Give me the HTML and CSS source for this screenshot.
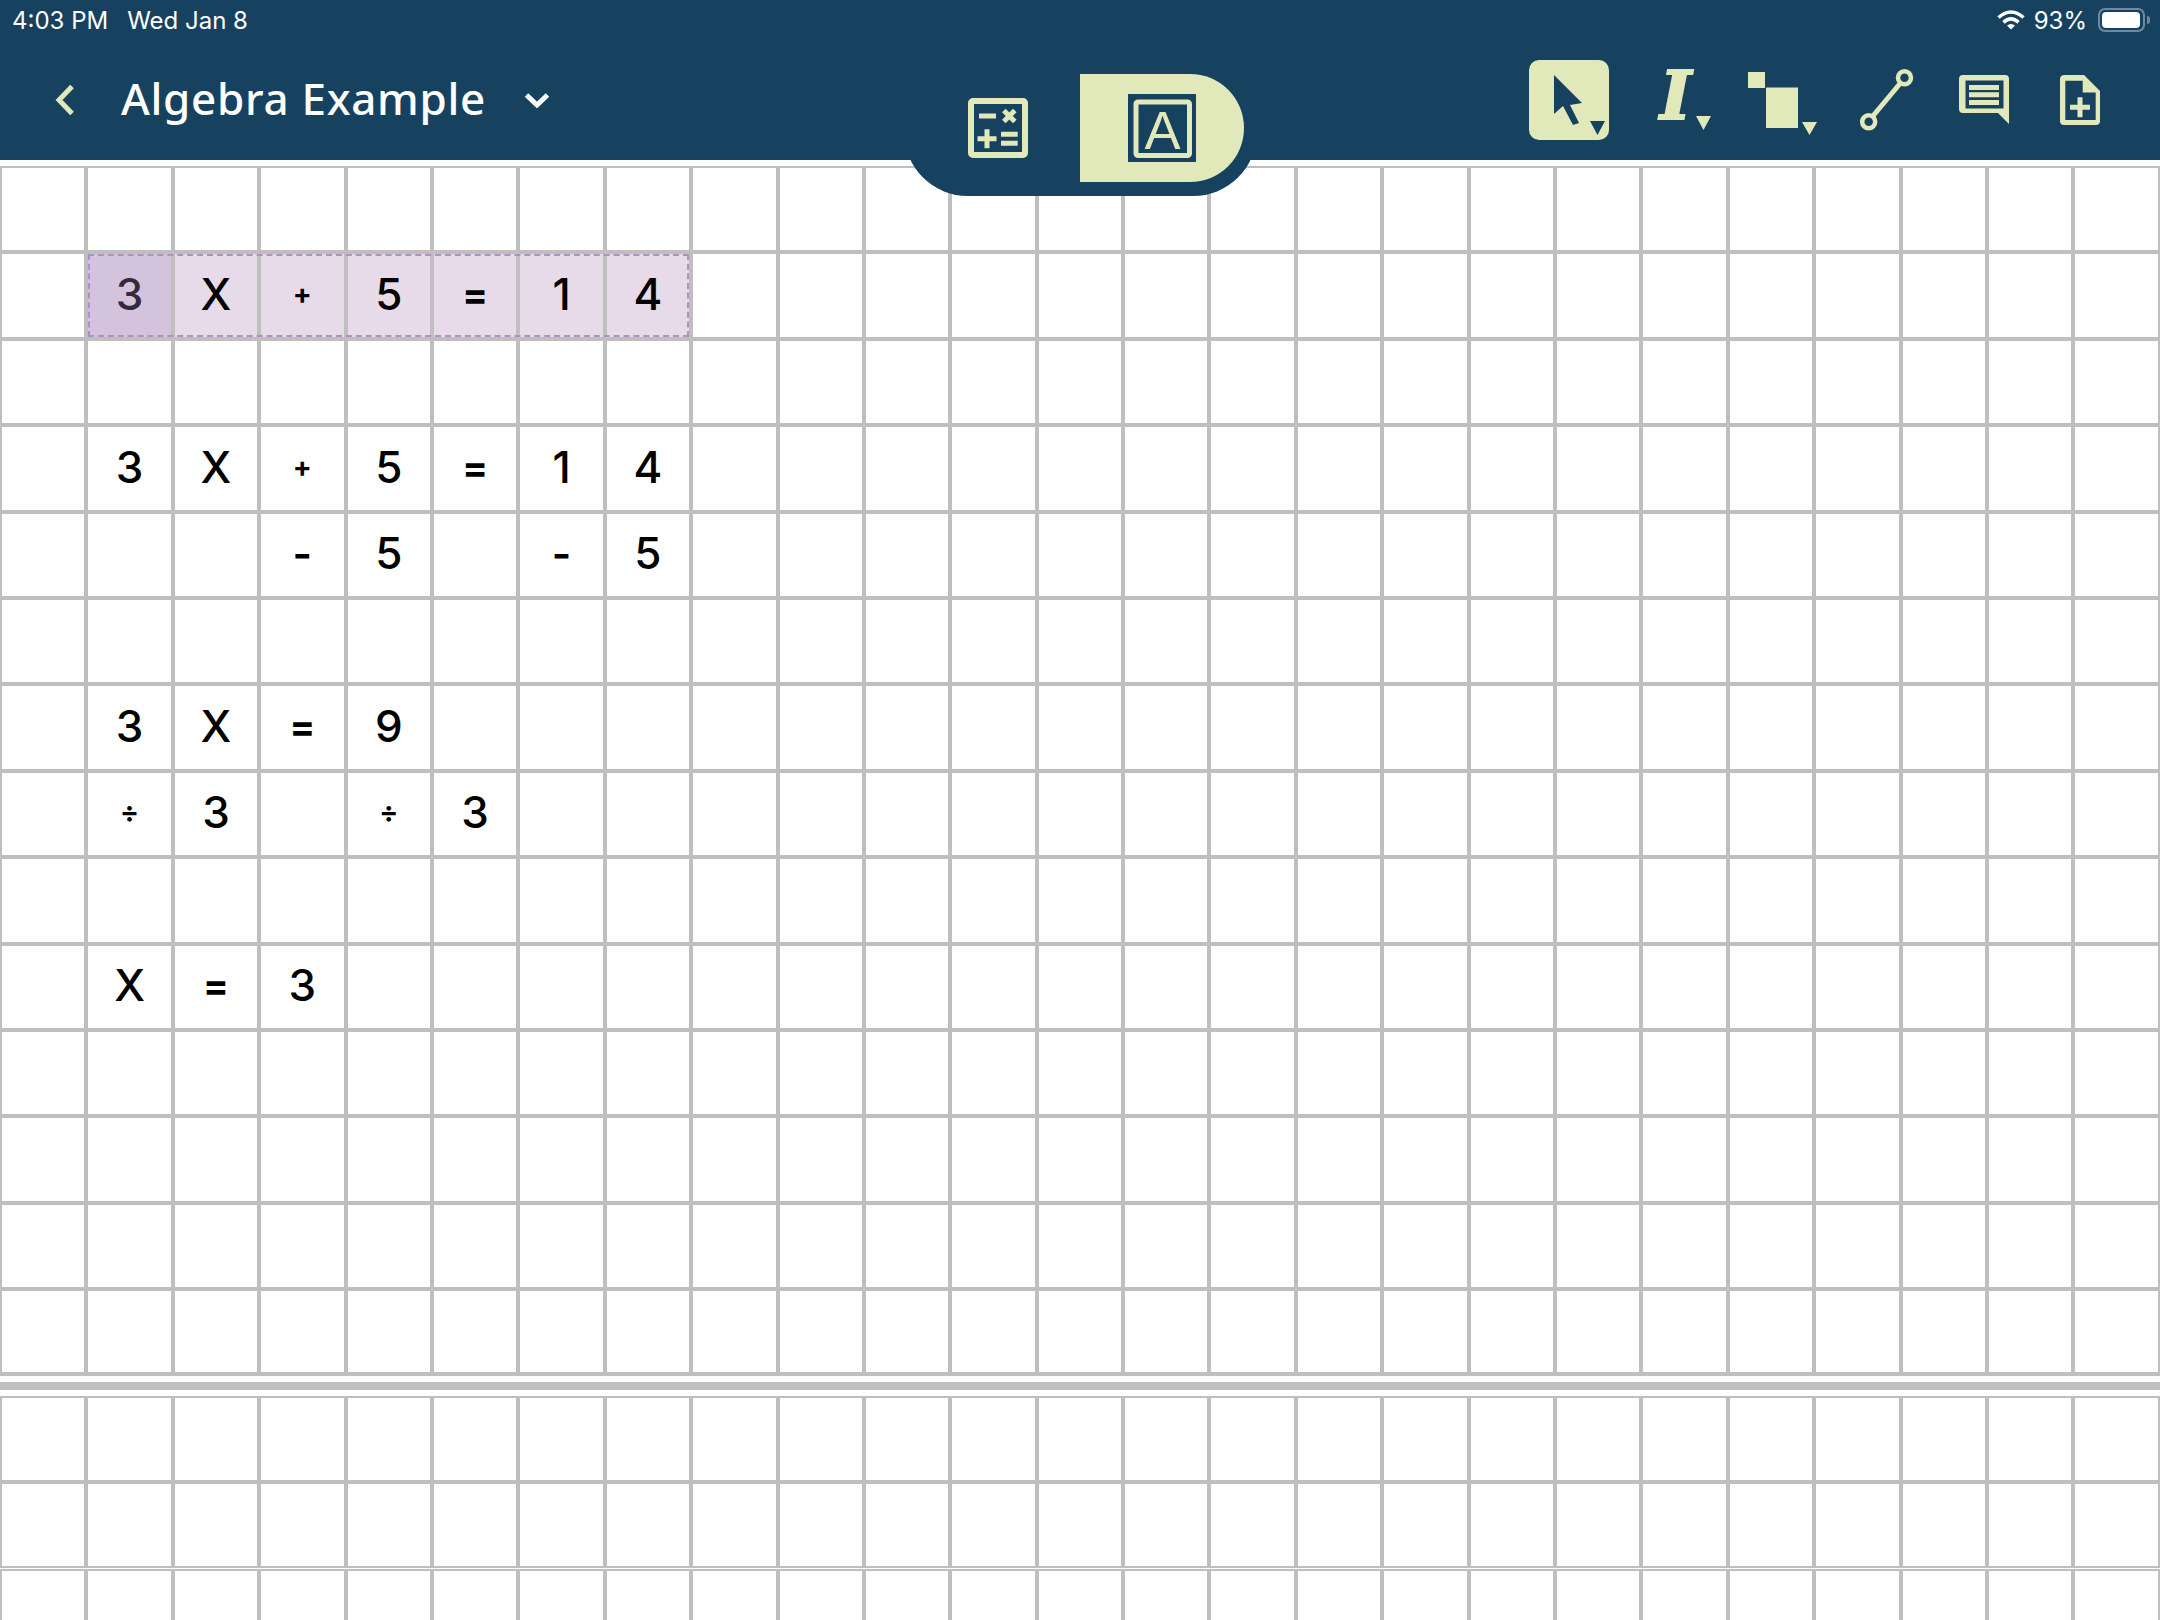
FILE: index.html
```html
<!DOCTYPE html>
<html lang="en">
<head>
    <meta charset="UTF-8">
    <title>Algebra Example</title>
    <link rel="stylesheet" href="styles.css">
</head>
<body>
    <header class="header">
        <div class="status-bar">
            <span class="status-time">4:03 PM</span>
            <span class="status-date">Wed Jan 8</span>
            <svg class="wifi" width="28" height="20" viewBox="0 0 28 20">
                <path d="M1.5 7.5Q14 -3.5 26.5 7.5M6.5 12.3Q14 5.6 21.5 12.3" fill="none" stroke="#fff" stroke-width="3.6"/>
                <path d="M10 15.5Q14 12.5 18 15.5L14 19.5Z" fill="#fff"/>
            </svg>
            <span class="status-battery-text">93%</span>
            <div class="battery"><div class="battery-fill"></div></div>
            <div class="battery-tip"></div>
        </div>
        <div class="nav-bar">
            <svg class="back" width="20" height="32" viewBox="0 0 20 32">
                <path d="M17 2.5L4 16L17 29.5" fill="none" stroke="#e1e9bb" stroke-width="5"/>
            </svg>
            <h1 class="title">Algebra Example</h1>
            <svg class="title-arrow" width="26" height="16" viewBox="0 0 26 16">
                <path d="M2.5 3L13 13L23.5 3" fill="none" stroke="#fff" stroke-width="5"/>
            </svg>
            <div class="toolbar">
                <div class="tool-selected">
                    <svg width="80" height="80" viewBox="0 0 80 80">
                        <path d="M25 15L53 43L41 45L50 63L44 65L34 46L25 54Z" fill="#17425f"/>
                        <path d="M61 61H76L68.5 75Z" fill="#17425f"/>
                    </svg>
                </div>
                <div class="tool-text">
                    <span class="tool-letter">I</span>
                    <svg class="tool-arrow" width="15" height="14" viewBox="0 0 15 14">
                        <path d="M0 0H15L7.500 14Z" fill="#e1e9bb"/>
                    </svg>
                </div>
                <svg class="tool-shape" width="70" height="63" viewBox="0 0 70 63">
                    <path d="M0 0H17V16H0ZM18 15.500H50V56H18ZM54 50H69L61.500 63Z" fill="#e1e9bb"/>
                </svg>
                <svg class="tool-line" width="54" height="64" viewBox="0 0 54 64">
                    <circle cx="44.500" cy="9.700" r="6.500" fill="none" stroke="#e1e9bb" stroke-width="4.500"/>
                    <circle cx="8.700" cy="53.700" r="6.500" fill="none" stroke="#e1e9bb" stroke-width="4.500"/>
                    <path d="M40.500 15L12.500 48.500" stroke="#e1e9bb" stroke-width="5"/>
                </svg>
                <svg class="tool-comment" width="52" height="52" viewBox="0 0 52 52">
                    <path fill-rule="evenodd" d="M5 1H47Q51 1 51 5V50L40 39H5Q1 39 1 35V5Q1 1 5 1ZM7.500 6.500V34.500H45.500V6.500Z" fill="#e1e9bb"/>
                    <path d="M11 11H41V16H11ZM11 18.300H41V23.300H11ZM11 26H41V31H11Z" fill="#e1e9bb"/>
                </svg>
                <svg class="tool-doc" width="40" height="52" viewBox="0 0 40 52">
                    <path fill-rule="evenodd" d="M5 1H24L40 17V47Q40 51 36 51H4Q0 51 0 47V5Q0 1 5 1ZM5.300 6.700V46H35.700V18.500H22.700V6.700Z" fill="#e1e9bb"/>
                    <path d="M20 23.300V43.300M10 33.300H30" stroke="#e1e9bb" stroke-width="5"/>
                </svg>
            </div>
        </div>
        <div class="mode-switch">
            <svg class="mode-calc" width="60" height="60" viewBox="0 0 60 60">
                <rect x="3" y="3" width="54" height="54" rx="2" fill="none" stroke="#e1e9bb" stroke-width="6"/>
                <path d="M11 18H28M35.800 12.500L46.800 23.500M46.800 12.500L35.800 23.500M9.500 40.700H28.500M19 31.200V50.200M33 36.200H49.700M33 45.200H49.700" stroke="#e1e9bb" stroke-width="5"/>
            </svg>
            <div class="mode-active">
                <svg width="68" height="68" viewBox="0 0 68 68">
                    <rect width="68" height="68" fill="#17425f"/>
                    <rect x="8" y="8" width="53.500" height="53.500" rx="2" fill="none" stroke="#e1e9bb" stroke-width="5"/>
                    <text class="mode-letter" x="34.500" y="55" text-anchor="middle">A</text>
                </svg>
            </div>
        </div>
    </header>

    <main class="pages">
        <div class="sheet sheet-main" id="sheetMain"></div>
        <div class="page-break"></div>
        <div class="sheet sheet-next" id="sheetNext"></div>
        <div class="sheet sheet-last" id="sheetLast"></div>
    </main>

    <script src="script.js"></script>
</body>
</html>
```

FILE: styles.css
```css
body {
    margin: 0;
    width: 2160px;
    height: 1620px;
    overflow: hidden;
    background: #fff;
    font-family: Inter, "Liberation Sans", sans-serif;
}
.header {
    position: relative;
    z-index: 2;
    height: 160px;
    background: #17425f;
    color: #fff;
}
.status-bar {
    display: flex;
    align-items: center;
    height: 40px;
    padding: 0 10px 0 12px;
    font-size: 24px;
}
.status-date {
    margin-left: 19px;
}
.wifi {
    margin-left: auto;
}
.status-battery-text {
    margin-left: 9px;
}
.battery {
    box-sizing: border-box;
    width: 47px;
    height: 24px;
    margin-left: 11px;
    padding: 2px;
    border: 2px solid #6f8aa0;
    border-radius: 7px;
}
.battery-fill {
    width: 38px;
    height: 16px;
    background: #fff;
    border-radius: 4px;
}
.battery-tip {
    width: 3px;
    height: 8px;
    margin-left: 2px;
    background: #6f8aa0;
    border-radius: 0 3px 3px 0;
}
.nav-bar {
    display: flex;
    align-items: center;
    height: 120px;
    padding: 0 60px 0 55px;
}
.title {
    margin: 0 0 4px 46px;
    font-family: "Noto Sans", sans-serif;
    font-size: 44px;
    font-weight: 500;
    letter-spacing: 0.7px;
}
.title-arrow {
    margin-left: 38px;
}
.toolbar {
    display: flex;
    align-items: center;
    margin-left: auto;
}
.tool-selected {
    width: 80px;
    height: 80px;
    background: #e1e9bb;
    border-radius: 10px;
}
.tool-selected svg {
    display: block;
}
.tool-text {
    position: relative;
    width: 54px;
    height: 60px;
    margin-left: 48px;
}
.tool-letter {
    position: absolute;
    left: 3px;
    top: -8px;
    font-family: "DejaVu Serif", serif;
    font-size: 67px;
    font-weight: bold;
    font-style: italic;
    line-height: 1;
    color: #e1e9bb;
    -webkit-text-stroke: 2px #e1e9bb;
}
.tool-arrow {
    position: absolute;
    left: 39px;
    top: 46px;
}
.tool-shape {
    margin: 7px 0 0 37px;
}
.tool-line {
    margin-left: 42px;
}
.tool-comment {
    margin-left: 44px;
}
.tool-doc {
    margin-left: 50px;
}
.mode-switch {
    position: absolute;
    left: 904px;
    top: 68px;
    box-sizing: border-box;
    display: flex;
    width: 353px;
    height: 128px;
    padding: 6px 0 0 64px;
    background: #17425f;
    border-radius: 64px;
}
.mode-calc {
    margin: 24px 0 0 0;
}
.mode-active {
    display: flex;
    align-items: center;
    justify-content: center;
    width: 164px;
    height: 108px;
    margin-left: 52px;
    background: #e1e9bb;
    border-radius: 0 54px 54px 0;
}
.mode-letter {
    font-family: "Liberation Sans", sans-serif;
    font-size: 54px;
    fill: #e1e9bb;
}
.pages {
    padding-top: 6px;
}
.sheet {
    display: grid;
    grid-template-columns: repeat(25, 86.4px);
}
.sheet-main {
    grid-template-rows: repeat(13, 86.4px) 84.8px;
    border-bottom: 2px solid #bfbfbf;
}
.sheet-next {
    grid-auto-rows: 86px;
}
.sheet-last {
    grid-auto-rows: 86px;
    margin-top: 1px;
}
.page-break {
    height: 8px;
    margin: 6px 0;
    background: #bfbfbf;
}
.cell {
    position: relative;
    box-sizing: border-box;
    display: flex;
    align-items: center;
    justify-content: center;
    padding-bottom: 3px;
    border: 2px solid #bfbfbf;
    font-size: 44px;
    font-weight: 500;
    color: #000;
}
.cell.small-op {
    font-size: 28px;
    font-weight: 700;
}
.cell.minus {
    font-size: 42px;
    font-weight: 600;
}
.cell.eq {
    font-size: 38px;
    font-weight: 700;
}
.cell.selected {
    background: #e7dbea;
    background-clip: padding-box;
}
.cell.selected-first {
    z-index: 1;
    background: #d4c3dc;
    background-clip: padding-box;
    color: #352a3d;
}
.selection-box {
    position: absolute;
    left: 0;
    top: 0;
    box-sizing: border-box;
    width: 601px;
    height: 83px;
    border: 2px dashed #b38fc4;
}
```

FILE: script.js
```js
// cell contents of the main sheet, row -> values from the second column on
const rows = {
    1: ['3', 'X', '+', '5', '=', '1', '4'],
    3: ['3', 'X', '+', '5', '=', '1', '4'],
    4: ['', '', '-', '5', '', '-', '5'],
    6: ['3', 'X', '=', '9'],
    7: ['÷', '3', '', '÷', '3'],
    9: ['X', '=', '3']
};

function fillSheet(sheet, rowCount, data, hasSelection) {
    for (let r = 0; r < rowCount; r++) {
        for (let c = 0; c < 25; c++) {
            const cell = document.createElement('div');
            cell.className = 'cell';
            const values = data[r];
            const text = values && c >= 1 ? values[c - 1] : '';
            if (text) {
                cell.textContent = text;
                if (text === '+' || text === '÷') cell.classList.add('small-op');
                if (text === '-') cell.classList.add('minus');
                if (text === '=') cell.classList.add('eq');
            }
            if (hasSelection && r === 1 && c === 1) {
                cell.classList.add('selected-first');
                const box = document.createElement('div');
                box.className = 'selection-box';
                cell.appendChild(box);
            } else if (hasSelection && r === 1 && c > 1 && c < 8) {
                cell.classList.add('selected');
            }
            sheet.appendChild(cell);
        }
    }
}

fillSheet(document.getElementById('sheetMain'), 14, rows, true);
fillSheet(document.getElementById('sheetNext'), 2, {}, false);
fillSheet(document.getElementById('sheetLast'), 1, {}, false);
```
